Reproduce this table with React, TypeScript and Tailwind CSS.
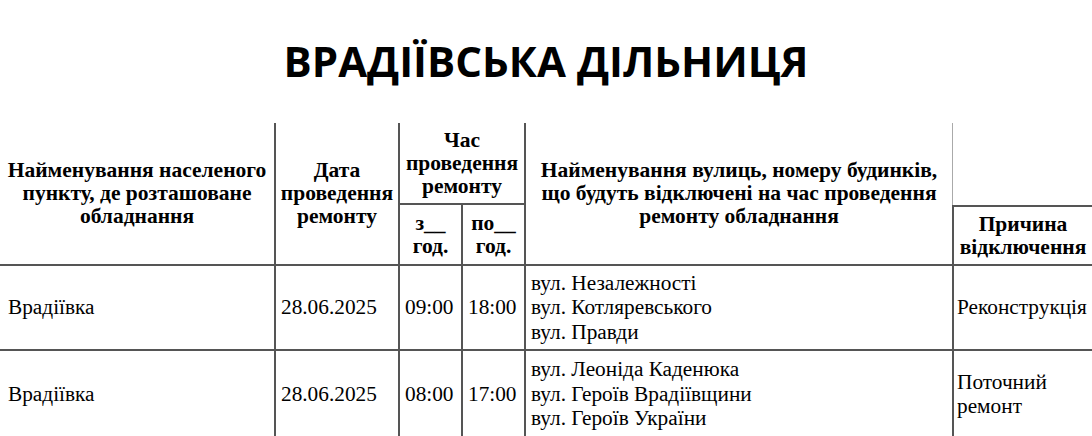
import React from 'react';

type Row = {
  place: string;
  date: string;
  from: string;
  to: string;
  streets: string[];
  reason: string[];
};

const rows: Row[] = [
  {
    place: 'Врадіївка',
    date: '28.06.2025',
    from: '09:00',
    to: '18:00',
    streets: ['вул. Незалежності', 'вул. Котляревського', 'вул. Правди'],
    reason: ['Реконструкція'],
  },
  {
    place: 'Врадіївка',
    date: '28.06.2025',
    from: '08:00',
    to: '17:00',
    streets: ['вул. Леоніда Каденюка', 'вул. Героїв Врадіївщини', 'вул. Героїв України'],
    reason: ['Поточний', 'ремонт'],
  },
];

const Lines: React.FC<{ items: string[] }> = ({ items }) => (
  <>
    {items.map((t, i) => (
      <React.Fragment key={i}>
        {i > 0 && <br />}
        {t}
      </React.Fragment>
    ))}
  </>
);

export default function App() {
  return (
    <div className="w-[1092px] h-[436px] overflow-hidden bg-white text-black">
      <h1 className="pt-[40px] text-center font-['Open_Sans',sans-serif] text-[42px] font-bold leading-none">
        ВРАДІЇВСЬКА ДІЛЬНИЦЯ
      </h1>

      <table className="mt-[41px] w-[1092px] table-fixed border-separate border-spacing-0 font-['Liberation_Serif','Times_New_Roman',serif]">
        <colgroup>
          <col className="w-[274px]" />
          <col className="w-[124px]" />
          <col className="w-[63px]" />
          <col className="w-[63px]" />
          <col className="w-[428px]" />
          <col className="w-[140px]" />
        </colgroup>
        <thead className="text-[21.5px] font-bold leading-[23px]">
          <tr className="h-[82px]">
            <th rowSpan={2} className="border-b-2 border-[#555] align-middle">
              Найменування населеного
              <br />
              пункту, де розташоване
              <br />
              обладнання
            </th>
            <th rowSpan={2} className="border-b-2 border-l-2 border-[#555] align-middle">
              Дата
              <br />
              проведення
              <br />
              ремонту
            </th>
            <th colSpan={2} className="border-b-2 border-l-2 border-[#555] align-middle">
              Час
              <br />
              проведення
              <br />
              ремонту
            </th>
            <th rowSpan={2} className="border-b-2 border-l-2 border-[#555] align-middle">
              Найменування вулиць, номеру будинків,
              <br />
              що будуть відключені на час проведення
              <br />
              ремонту обладнання
            </th>
            <th className="border-l border-[#aaa]" />
          </tr>
          <tr className="h-[61px]">
            <th className="border-b-2 border-l-2 border-[#555] align-middle">
              з__
              <br />
              год.
            </th>
            <th className="border-b-2 border-l-2 border-[#555] align-middle">
              по__
              <br />
              год.
            </th>
            <th className="border-y-2 border-l-2 border-[#555] align-middle">
              Причина
              <br />
              відключення
            </th>
          </tr>
        </thead>
        <tbody className="text-[21.3px] font-normal leading-[24.5px]">
          {rows.map((r, i) => (
            <tr key={i} className={i === rows.length - 1 ? 'h-[88px]' : 'h-[85px]'}>
              <td className="border-b-2 border-[#555] pl-[8px] align-middle">{r.place}</td>
              <td className="border-b-2 border-l-2 border-[#555] px-[5px] align-middle">{r.date}</td>
              <td className="border-b-2 border-l-2 border-[#555] px-[5px] align-middle">{r.from}</td>
              <td className="border-b-2 border-l-2 border-[#555] px-[5px] align-middle">{r.to}</td>
              <td className="border-b-2 border-l-2 border-[#555] px-[5px] align-middle">
                <Lines items={r.streets} />
              </td>
              <td className="border-b-2 border-l-2 border-[#555] pl-[3px] align-middle">
                <Lines items={r.reason} />
              </td>
            </tr>
          ))}
        </tbody>
      </table>
    </div>
  );
}
